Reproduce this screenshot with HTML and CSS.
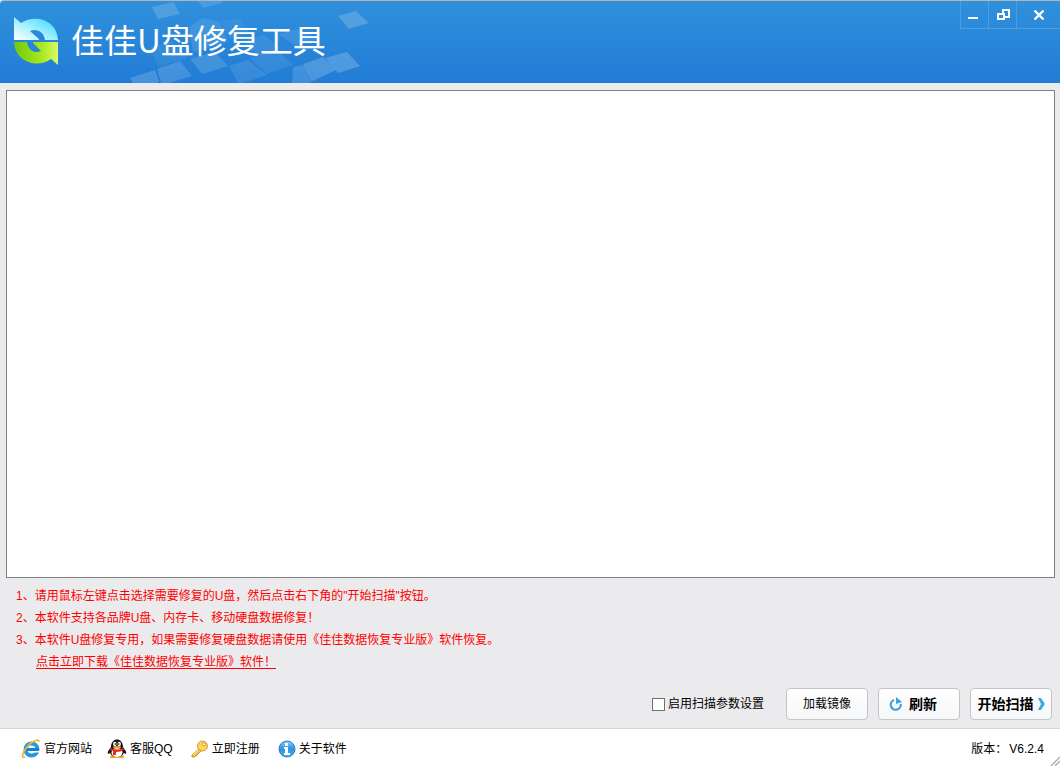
FILE: index.html
```html
<!DOCTYPE html>
<html lang="zh-CN">
<head>
<meta charset="utf-8">
<meta name="viewport" content="width=device-width, initial-scale=1">
<title>佳佳U盘修复工具</title>
<link rel="stylesheet" href="styles.css">
</head>
<body>
<header class="titlebar">
  <svg class="tiles" width="380" height="82" viewBox="0 0 380 82" aria-hidden="true">
    <g fill="#fff">
      <path opacity=".16" d="M152 6l22-5 6 12-22 5z"/>
      <path opacity=".12" d="M198 0h24l-1 2-18 5z"/>
      <path opacity=".18" d="M338 15l18-5 13 12-20 6z"/>
      <path opacity=".17" d="M130 77l25-8 4 11-2 2h-24z"/>
      <path opacity=".15" d="M157 68l23-8 12 15-23 7h-8z"/>
      <path opacity=".14" d="M190 58l25-7 13 14-26 8z"/>
      <path opacity=".06" d="M150 46l22-6 15 17-29 9z"/>
      <path opacity=".1" d="M189 26l14-9 17 4 8 20-35 10z"/>
      <path opacity=".06" d="M221 20l18-2 12 14-21 6z"/>
      <path opacity=".1" d="M229 65l19-6 19 15-24 8h-5z"/>
      <path opacity=".08" d="M250 57l26-9 17 16-27 9z"/>
      <path opacity=".08" d="M244 40l20-6 16 13-24 8z"/>
      <path opacity=".09" d="M278 33l20-5 20 10-21 8z"/>
      <path opacity=".14" d="M293 66l11-2 9 15-3 3h-18z"/>
      <path opacity=".19" d="M303 63l20-7 13 13-23 11z"/>
      <path opacity=".2" d="M325 57l22-6 13 14-22 7z"/>
    </g>
  </svg>
  <div class="brand">
    <svg class="logo" width="46" height="50" viewBox="0 0 46 50" aria-hidden="true">
      <defs>
        <linearGradient id="ice" x1="0" y1="1" x2="1" y2="0"><stop offset="0" stop-color="#fff"/><stop offset=".45" stop-color="#a4f1ff"/><stop offset="1" stop-color="#27d6fb"/></linearGradient>
        <linearGradient id="lime" x1="0" y1="0" x2="1" y2="0"><stop offset="0" stop-color="#6fc80f"/><stop offset=".65" stop-color="#aaea20"/><stop offset="1" stop-color="#d8fa6a"/></linearGradient>
      </defs>
      <path fill="url(#ice)" d="M1 1l7 6C21-2 44 3 45 24H32C31 16 24 12 17 15l9 8v1H1z"/>
      <path fill="url(#lime)" d="M1 26h13c1 8 7 12 14 9l-8-8v-1h25v23l-7-6C24 53 2 46 1 26z"/>
    </svg>
    <h1 class="title">佳佳U盘修复工具</h1>
  </div>
  <div class="controls">
    <button class="control" type="button" aria-label="最小化"><svg width="14" height="14" viewBox="0 0 14 14"><path fill="#fff" d="M0 9h10v2H0z"/></svg></button>
    <button class="control" type="button" aria-label="还原"><svg width="14" height="14" viewBox="0 0 14 14"><path fill="none" stroke="#fff" stroke-width="2" d="M7 5V2h6v7H8M2 6h6v5H2z"/></svg></button>
    <button class="control control-close" type="button" aria-label="关闭"><svg width="14" height="14" viewBox="0 0 14 14"><path fill="none" stroke="#fff" stroke-width="2.4" d="M2.5 2.5l9 9M11.500 2.500l-9 9"/></svg></button>
  </div>
</header>
<main class="workspace">
  <section class="device-list" aria-label="设备列表"></section>
  <div class="notes">
    <p>1、请用鼠标左键点击选择需要修复的U盘，然后点击右下角的"开始扫描"按钮。</p>
    <p>2、本软件支持各品牌U盘、内存卡、移动硬盘数据修复！</p>
    <p>3、本软件U盘修复专用，如果需要修复硬盘数据请使用《佳佳数据恢复专业版》软件恢复。</p>
    <p class="download"><a href="#">点击立即下载《佳佳数据恢复专业版》软件！</a></p>
  </div>
  <div class="actions">
    <label class="option"><input class="check" type="checkbox">启用扫描参数设置</label>
    <button class="button" type="button">加载镜像</button>
    <button class="button button-strong button-refresh" type="button">
      <svg width="14" height="14" viewBox="0 0 14 14" aria-hidden="true"><path fill="none" stroke="#3fa2df" stroke-width="2.200" d="M5 3A5 5 0 1 0 11.700 7"/><path fill="#3fa2df" d="M7 0l6 5-6 2z"/></svg>刷新</button>
    <button class="button button-strong button-scan" type="button">开始扫描<svg width="8" height="14" viewBox="0 0 8 14" aria-hidden="true"><path fill="#3fa9e8" d="M1 1h3l4 6-4 6H1l3-6z"/></svg></button>
  </div>
</main>
<footer class="footer">
  <nav class="links">
    <a class="link" href="#">
      <svg width="20" height="20" viewBox="0 0 20 20" aria-hidden="true">
        <circle cx="10.500" cy="10.500" r="6" fill="#e9f8ff" stroke="#2499e0" stroke-width="4"/>
        <path fill="#1882cf" d="M5 9h13v3H5z"/><path fill="#fff" d="M8 9q2-4 5 0zM8 12h11v1.500h-6q-3 2-5-1.500z"/>
        <path fill="none" stroke="#f2b632" stroke-width="1.800" d="M4 18c-4 2-3-4 2-10S18-1 18 3"/>
      </svg>官方网站</a>
    <a class="link" href="#">
      <svg width="20" height="20" viewBox="0 0 20 20" aria-hidden="true">
        <path fill="#f4a51c" d="M3 18q0-2 4-2h6q4 0 4 2t-4 1H7q-4 1-4-1z"/>
        <path fill="#171717" d="M4 8c0-10 12-10 12 0 2 3 4 5 3 7l-2-1q-2 4-7 4t-7-4l-2 1c-1-2 1-4 3-7z"/>
        <ellipse cx="10" cy="13.500" rx="5.500" ry="4.500" fill="#fff"/>
        <path fill="#e8281e" d="M4 9q6 3 12 0l1 2q-3 2-8 2v3H6v-4l-3-1z"/>
        <ellipse cx="7.800" cy="5" rx="1.700" ry="2.200" fill="#fff"/><ellipse cx="12.200" cy="5" rx="1.700" ry="2.200" fill="#fff"/>
        <circle cx="8.300" cy="5" r=".8"/><circle cx="11.700" cy="5" r=".8"/>
        <ellipse cx="10" cy="8.300" rx="4" ry="1.200" fill="#f6a81c"/>
      </svg>客服QQ</a>
    <a class="link" href="#">
      <svg width="18" height="18" viewBox="0 0 18 18" aria-hidden="true">
        <path fill="#f6bd36" stroke="#b9862b" stroke-width=".8" d="M9 8l2 2-6 6-2 1H1v-2z"/>
        <path fill="none" stroke="#fff0a0" d="M2 15l7-6"/>
        <circle cx="11.500" cy="6" r="5" fill="#ffd557" stroke="#bd8b25" stroke-width=".8"/>
        <circle cx="13" cy="4.200" r="1.500" fill="#fff" stroke="#b98928" stroke-width=".8"/>
      </svg>立即注册</a>
    <a class="link" href="#">
      <svg width="18" height="18" viewBox="0 0 18 18" aria-hidden="true">
        <defs><linearGradient id="info" x1="0" y1="0" x2="0" y2="1"><stop offset="0" stop-color="#8bd0f8"/><stop offset=".5" stop-color="#2b92df"/><stop offset="1" stop-color="#45b7f2"/></linearGradient></defs>
        <circle cx="9" cy="9" r="8" fill="url(#info)" stroke="#2c83cb"/>
        <path fill="#fff" d="M7 3h3v3H7zM6 7h4v6h2v2H6v-2h1V9H6z"/>
      </svg>关于软件</a>
  </nav>
  <p class="version"><span>版本：</span><span>V6.2.4</span></p>
  <svg class="grip" width="10" height="10" viewBox="0 0 10 10" aria-hidden="true"><path fill="none" stroke="#aaa" stroke-width="1.300" d="M1 10l9-9M5 10l5-5"/></svg>
</footer>
</body>
</html>
```
FILE: styles.css
```css
* { box-sizing: border-box; }

body {
  margin: 0;
  min-height: 100vh;
  display: flex;
  flex-direction: column;
  background: #ebebed;
  color: #000;
  font: 12px/22px "Liberation Sans", "Noto Sans CJK SC", sans-serif;
}

p, h1 { margin: 0; }
svg { display: block; flex: none; }

button {
  font: inherit;
  color: inherit;
  padding: 0;
}

.titlebar {
  position: relative;
  display: flex;
  justify-content: space-between;
  align-items: flex-start;
  height: 83px;
  border-top: 1px solid #b4b4b4;
  border-top-left-radius: 4px;
  background: linear-gradient(#3090dc, #217cd5);
  color: #fff;
}

.tiles { position: absolute; left: 0; top: 0; }

.brand {
  position: relative;
  display: flex;
  align-items: flex-start;
  gap: 12px;
  padding: 15px 0 0 13px;
}

.title {
  font-family: "Noto Sans CJK SC", sans-serif;
  font-size: 33px;
  font-weight: 400;
  line-height: 46px;
  white-space: nowrap;
}

.controls {
  display: flex;
  height: 28px;
  border-bottom: 1px solid #4a9ee2;
}

.control {
  display: flex;
  align-items: center;
  justify-content: center;
  width: 28px;
  border: 0;
  border-left: 1px solid #4a9ee2;
  background: none;
}

.control-close { width: 44px; }

.workspace {
  flex: 1;
  display: flex;
  flex-direction: column;
  padding: 7px 5px 8px 6px;
}

.device-list {
  flex: 1;
  min-height: 120px;
  border: 1px solid #808080;
  background: #fff;
}

.notes {
  padding: 7px 10px 0;
  color: #f00;
}

.download { padding-left: 20px; }
.download a { color: inherit; text-underline-offset: 2px; }

.actions {
  display: flex;
  align-items: center;
  justify-content: flex-end;
  gap: 10px;
  padding: 15px 3px 0 0;
}

.option {
  display: flex;
  align-items: center;
  gap: 3px;
  margin-right: 12px;
}

.check {
  appearance: none;
  width: 13px;
  height: 13px;
  margin: 0;
  border: 1px solid #707070;
  background: #fff;
}

.check:checked { background: #3090dc; }

.button {
  display: flex;
  align-items: center;
  justify-content: center;
  width: 82px;
  height: 32px;
  border: 1px solid #c4c5c9;
  border-radius: 4px;
  background: linear-gradient(#fff, #f6f7f8);
  white-space: nowrap;
}

.button-strong { font-size: 14px; font-weight: 700; }
.button-refresh { gap: 6px; padding-right: 12px; }
.button-scan { gap: 3px; }

.footer {
  position: relative;
  display: flex;
  align-items: center;
  justify-content: space-between;
  min-height: 38px;
  padding: 2px 16px 0 21px;
  border-top: 1px solid #d4d4da;
  background: #fff;
}

.links { display: flex; gap: 15px; }

.link {
  display: flex;
  align-items: center;
  gap: 3px;
  color: inherit;
  text-decoration: none;
}

.link:nth-child(n + 3) { margin-left: 3px; }

.version { display: flex; gap: 2px; }

.grip { position: absolute; right: 0; bottom: 0; }
```
